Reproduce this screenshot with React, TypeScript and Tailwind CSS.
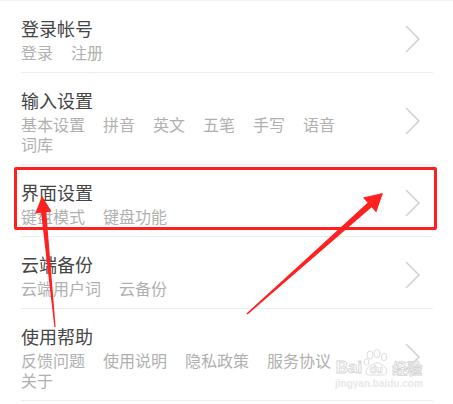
import React from 'react'

const rows = [
  { title: '登录帐号', items: ['登录', '注册'] },
  { title: '输入设置', items: ['基本设置', '拼音', '英文', '五笔', '手写', '语音', '词库'] },
  { title: '界面设置', items: ['键盘模式', '键盘功能'] },
  { title: '云端备份', items: ['云端用户词', '云备份'] },
  { title: '使用帮助', items: ['反馈问题', '使用说明', '隐私政策', '服务协议', '关于'] },
]

export default function App() {
  return (
    <div className="relative h-[404px] w-[453px] overflow-hidden border-t border-[#f2f2f2] bg-white font-['Noto_Sans_CJK_SC','Noto_Sans',sans-serif]">
      <ul className="pl-[21px] pr-[20px]">
        {rows.map((row) => (
          <SettingRow key={row.title} title={row.title} items={row.items} />
        ))}
      </ul>

      <Watermark />

      {/* annotation overlay */}
      <div className="pointer-events-none absolute left-[14px] top-[166px] h-[63px] w-[423px] rounded-[2px] border-[3px] border-[#ff1f1f]" />
      <svg
        className="pointer-events-none absolute left-0 top-0"
        width="453"
        height="404"
        viewBox="0 0 453 404"
      >
        <polygon
          fill="#ff2020"
          points="42,195 51.6,210.5 46.3,211.2 55.6,325.9 54.4,326.1 41.1,211.8 35.2,212.4"
        />
        <polygon
          fill="#ff2020"
          points="383,192 376.2,211.5 371.6,206.2 247.6,313.6 246.4,312.4 367.6,201.8 363,196.5"
        />
      </svg>
    </div>
  )
}

const SettingRow = ({ title, items }: { title: string; items: string[] }) => {
  return (
    <li className="flex items-center border-b border-[#ededed] pb-[10px] pt-[15px]">
      <div className="w-[340px]">
        <p className="text-[18px] leading-[24px] text-[#454545]">{title}</p>
        <div className="mt-[2px] flex flex-wrap gap-x-[18px] text-[16px] leading-[20px] text-[#b0b0b0]">
          {items.map((item) => (
            <span key={item}>{item}</span>
          ))}
        </div>
      </div>
      <svg className="ml-auto mr-[12px]" width="17" height="28" viewBox="0 0 17 28">
        <polyline
          points="2,1 15,14 2,27"
          fill="none"
          stroke="#d0d0d0"
          strokeWidth="1.5"
        />
      </svg>
    </li>
  )
}

const Watermark = () => {
  return (
    <div className="pointer-events-none absolute left-[335px] top-[348px] flex flex-col items-center text-white">
      <div className="flex items-end font-['Liberation_Sans',sans-serif] font-bold">
        <span className="text-[17px] leading-[18px] [-webkit-text-stroke:0.8px_#d4d4d4]">Bai</span>
        <span className="relative mx-[1px] flex h-[28px] w-[26px] items-end justify-center">
          <svg className="absolute left-0 top-0" width="26" height="28" viewBox="0 0 26 28">
            <g fill="none" stroke="#d8d8d8" strokeWidth="0.9">
              <ellipse cx="7" cy="6" rx="3" ry="4" />
              <ellipse cx="14" cy="4.5" rx="3" ry="4" />
              <ellipse cx="21" cy="8" rx="2.6" ry="3.6" />
              <ellipse cx="3.5" cy="13" rx="2.4" ry="3.2" />
              <path d="M6 26 C1 26 3 17 9 16 C12 13 16 13 19 16 C25 18 25 26 20 26 Z" />
            </g>
          </svg>
          <span className="relative mb-[2px] text-[11px] leading-[12px] [-webkit-text-stroke:0.6px_#d4d4d4]">du</span>
        </span>
        <span className="ml-[2px] font-['Noto_Sans_CJK_SC',sans-serif] text-[15px] leading-[18px] [-webkit-text-stroke:0.8px_#d4d4d4]">经验</span>
      </div>
      <span className="mt-[1px] font-['Liberation_Sans',sans-serif] text-[10px] font-bold leading-[11px] text-[#e8e8e8]">
        jingyan.baidu.com
      </span>
    </div>
  )
}
